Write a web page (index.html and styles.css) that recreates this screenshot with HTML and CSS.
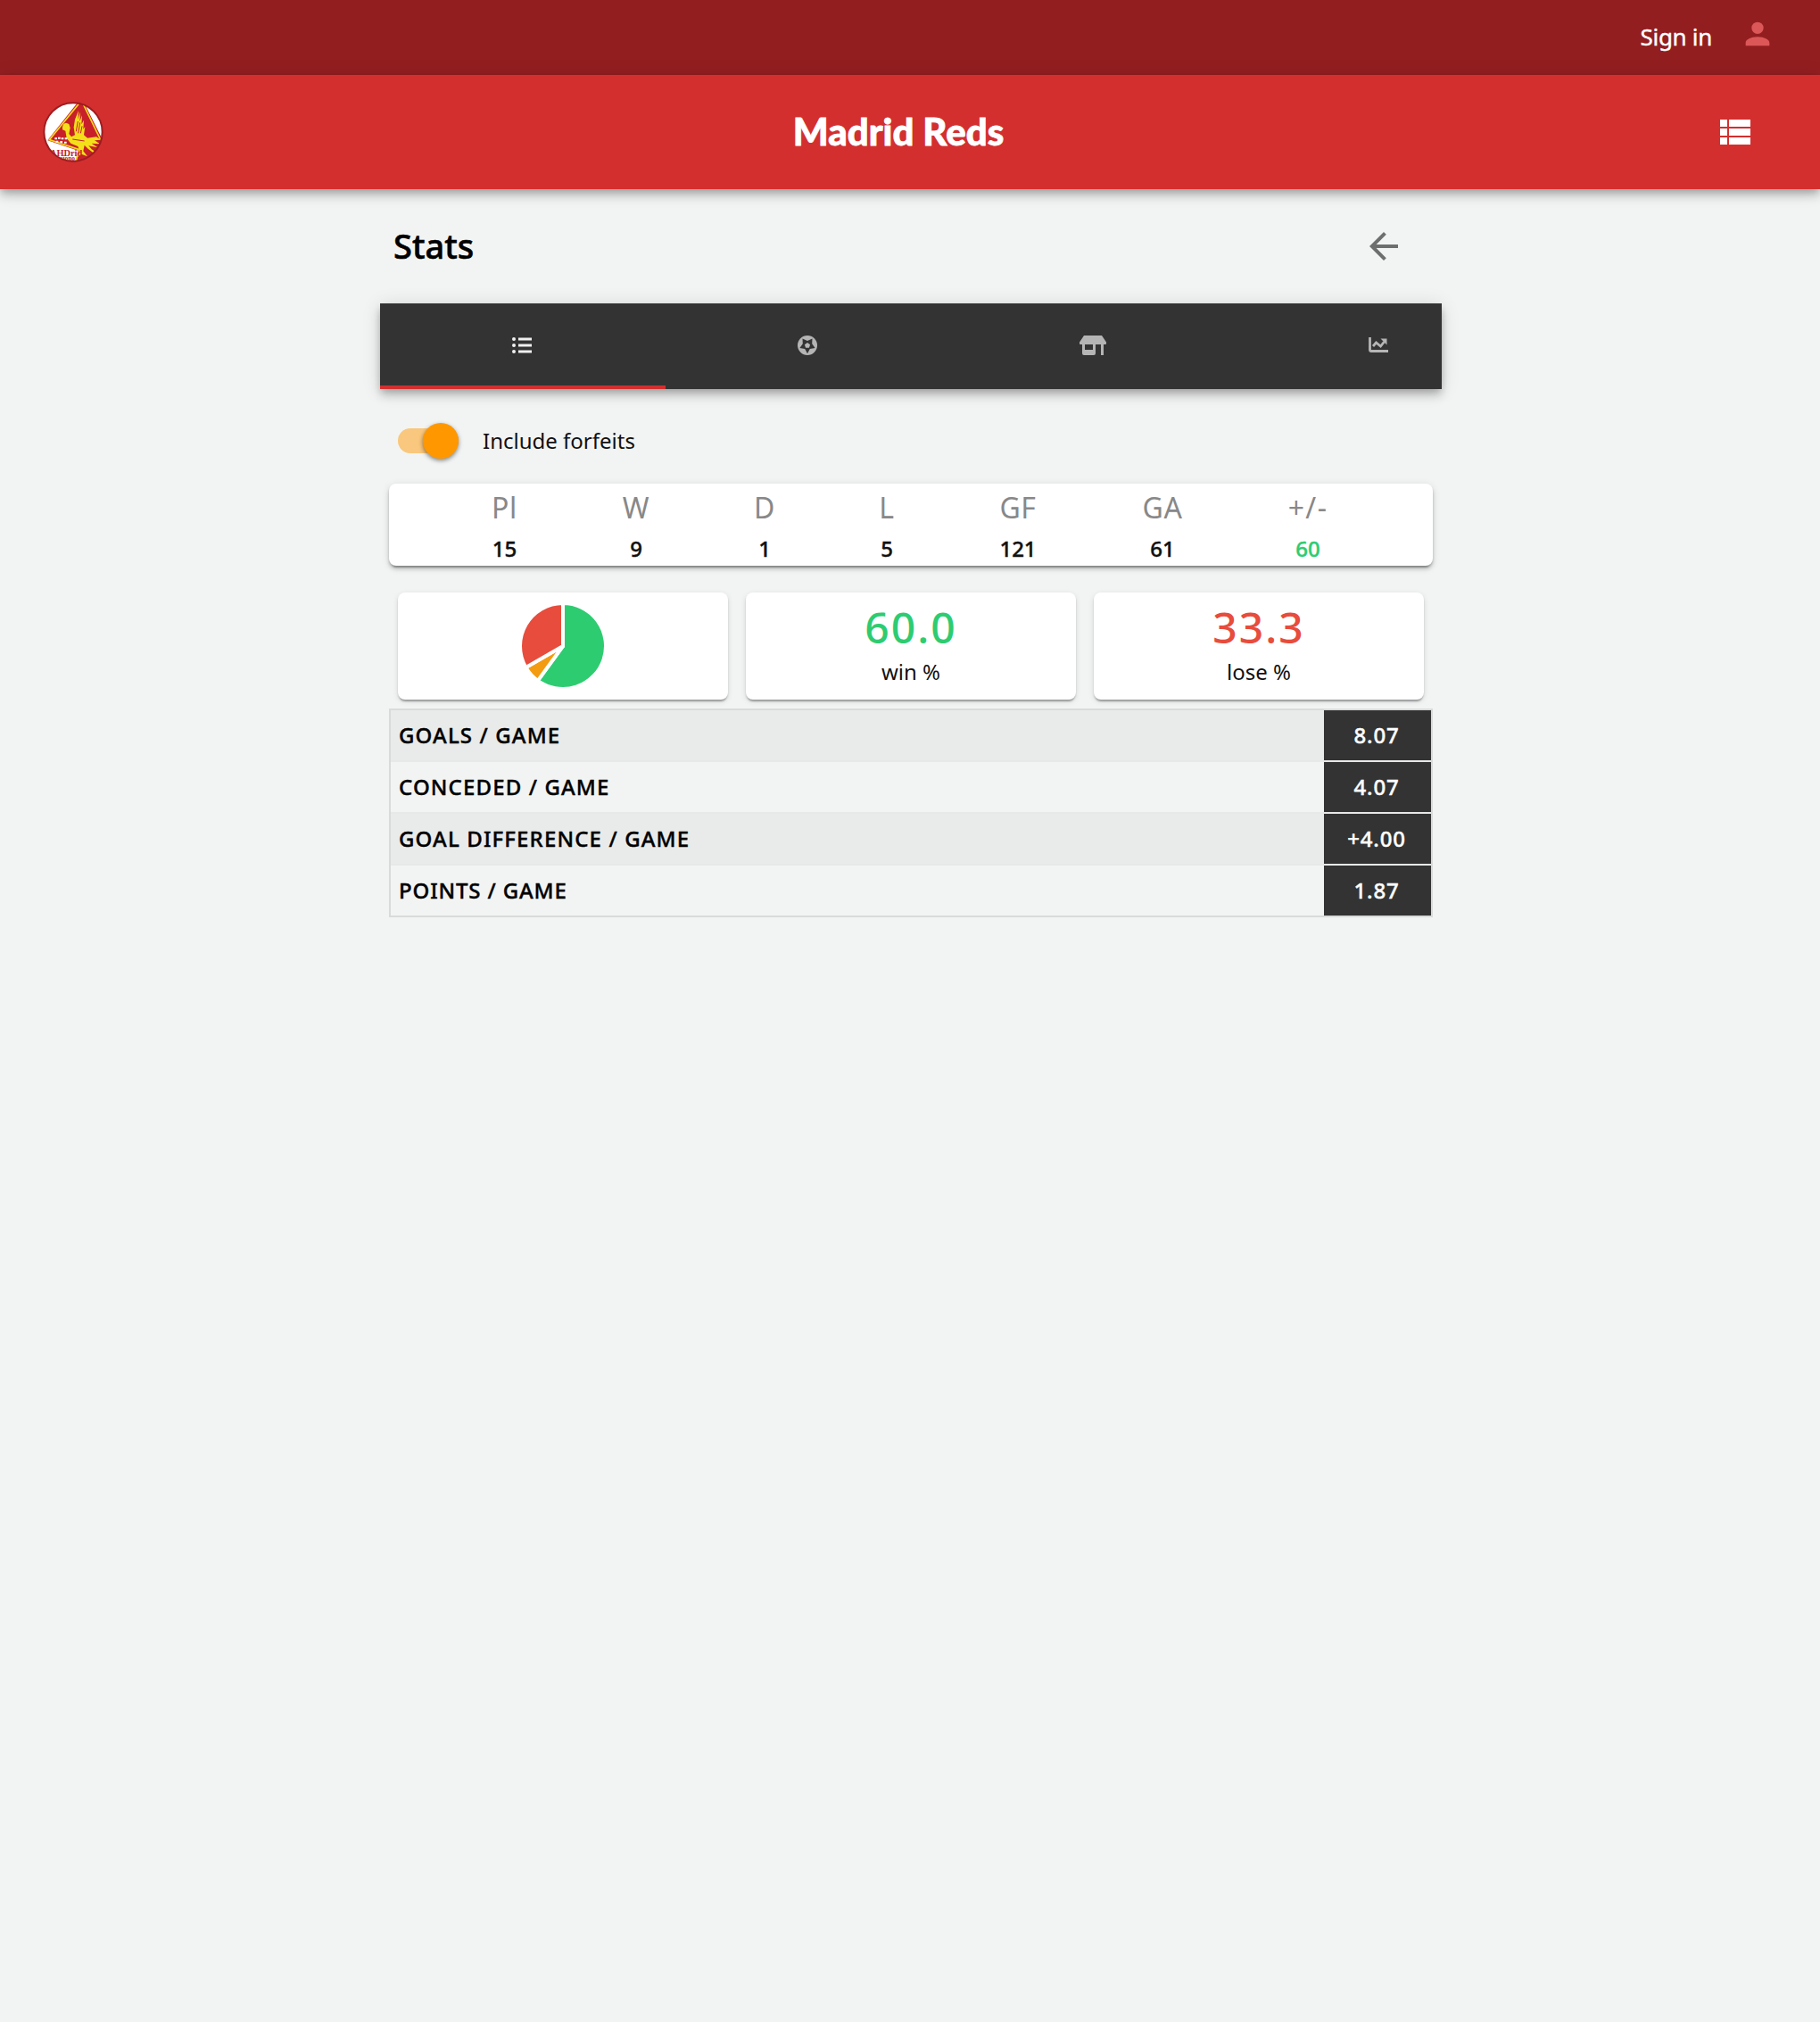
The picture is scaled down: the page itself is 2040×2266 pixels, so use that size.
FILE: index.html
```html
<!DOCTYPE html>
<html lang="en">
<head>
<meta charset="utf-8">
<title>Madrid Reds</title>
<link rel="stylesheet" href="styles.css">
</head>
<body>
<div class="topbar">
  <span class="signin">Sign in</span>
  <svg class="user" viewBox="0 0 24 24"><path d="M12 4a4 4 0 1 1 0 8 4 4 0 0 1 0-8M12 14c4.42 0 8 1.79 8 4v2H4v-2c0-2.21 3.58-4 8-4Z"/></svg>
</div>
<header class="header">
  <svg class="logo" viewBox="0 0 204 204">
    <defs><clipPath id="disc"><circle cx="102" cy="102" r="98"/></clipPath></defs>
    <circle cx="102" cy="102" r="98" fill="#fff"/>
    <g clip-path="url(#disc)">
      <path d="M124 -6 L16 130 L118 164 L110 204 L210 184 L200 126 L134 -6Z" fill="#c8202a"/>
      <path d="M120 8 L22 128 L120 160 L112 200 M134 4 L200 140" fill="none" stroke="#f4d91a" stroke-width="5"/>
      <path d="M66 84 L70 74 78 71 88 75 92 88 88 108 96 118 108 112 104 86 108 60 120 30 118 60 126 34 124 66 132 46 130 76 138 62 136 92 142 84 138 112 150 122 180 118 196 128 174 130 192 142 164 140 184 154 154 148 164 160 182 172 168 170 152 158 140 146 136 166 150 184 130 176 114 188 124 168 118 150 94 140 80 122 76 98 66 94Z" fill="#f4e01a"/>
      <path d="M112 100 L118 66 M119 106 L125 70 M127 106 L132 82 M100 126 L140 132" stroke="#c8202a" stroke-width="3"/>
      <path d="M40 124h8m3-2h8m3 2h8m4 0h8M44 134h8m6 1h8m6 2h8" stroke="#fff" stroke-width="6"/>
      <text class="crest" x="24" y="183">AHDrid</text>
      <text class="crest crest-small" x="58" y="198">ciono</text>
    </g>
    <circle cx="102" cy="102" r="98" fill="none" stroke="#9d1c20" stroke-width="6"/>
  </svg>
  <h1 class="brand">Madrid Reds</h1>
  <svg class="menu" viewBox="0 0 24 24"><path d="M4 5h4v4H4zM9 5h12v4H9zM4 10h4v4H4zM9 10h12v4H9zM4 15h4v4H4zM9 15h12v4H9z"/></svg>
</header>
<main class="page">
  <div class="titlebar">
    <h2>Stats</h2>
    <svg class="back" viewBox="0 0 24 24"><path d="M20 11H7.830l5.590-5.590L12 4l-8 8 8 8 1.410-1.410L7.830 13H20z"/></svg>
  </div>
  <nav class="tabs">
    <div class="tab active"><svg width="22" height="22" viewBox="0 0 22 22"><g fill="currentColor"><circle cx="2" cy="4" r="2"/><circle cx="2" cy="11" r="2"/><circle cx="2" cy="18" r="2"/><path d="M7 2.500h15v3H7zM7 9.500h15v3H7zM7 16.500h15v3H7z"/></g></svg></div>
    <div class="tab"><svg width="22" height="22" viewBox="0 0 22 22"><circle cx="11" cy="11" r="11" fill="currentColor"/><path fill="#333" d="M11 20.200L8.200 15.100 2.400 14 5.800 9.300 5.500 3.500 11 6l5.500-2.500-.3 5.800 3.400 4.700-5.800 1.100z"/><path fill="currentColor" d="M11 8l3.100 2.200-1.200 3.600H9.100l-1.200-3.600z"/></svg></div>
    <div class="tab"><svg width="30" height="22" viewBox="0 0 30 22"><path fill="currentColor" d="M5 0h20l5 7.500V9q0 1-1 1H1Q0 10 0 9V7.500zM3 10h3v6h9v-6h3v10q0 2-2 2H5q-2 0-2-2zM24 10h3v12h-3z"/></svg></div>
    <div class="tab"><svg width="22" height="18" viewBox="0 0 22 18"><path d="M1.500 0v14.500q0 1 1 1H22M5 10l3.500-4 5 4 4-5" fill="none" stroke="currentColor" stroke-width="2.800"/><path d="M13.500 1.500H20.500v7z" fill="currentColor"/></svg></div>
  </nav>
  <div class="toggle-row">
    <span class="switch"><span class="thumb"></span></span>
    <span class="toggle-label">Include forfeits</span>
  </div>
  <section class="card record">
    <div><span class="head">Pl</span><b>15</b></div>
    <div><span class="head">W</span><b>9</b></div>
    <div><span class="head">D</span><b>1</b></div>
    <div><span class="head">L</span><b>5</b></div>
    <div><span class="head">GF</span><b>121</b></div>
    <div><span class="head">GA</span><b>61</b></div>
    <div><span class="head wide">+/-</span><b class="good">60</b></div>
  </section>
  <section class="tiles">
    <div class="card tile pie-tile">
      <svg class="pie" viewBox="-48 -48 96 96"><g stroke="#fff" stroke-width="4"><path fill="#2ecc71" d="M0 0V-48A48 48 0 1 1 -28.210 38.830Z"/><path fill="#f39c12" d="M0 0L-28.210 38.830A48 48 0 0 1 -41.570 24Z"/><path fill="#e74c3c" d="M0 0L-41.570 24A48 48 0 0 1 0 -48Z"/></g></svg>
    </div>
    <div class="card tile"><span class="big good">60.0</span><span class="caption">win %</span></div>
    <div class="card tile"><span class="big bad">33.3</span><span class="caption">lose %</span></div>
  </section>
  <section class="rates">
    <div class="rate"><span class="name">GOALS / GAME</span><span class="value">8.07</span></div>
    <div class="rate"><span class="name">CONCEDED / GAME</span><span class="value">4.07</span></div>
    <div class="rate"><span class="name">GOAL DIFFERENCE / GAME</span><span class="value">+4.00</span></div>
    <div class="rate"><span class="name snug">POINTS / GAME</span><span class="value">1.87</span></div>
  </section>
</main>
</body>
</html>
```
FILE: styles.css
```css
* { box-sizing: border-box; }
body { margin: 0; min-height: 2266px; background: #f2f4f3; color: #000; font-family: "Noto Sans", sans-serif; font-size: 24px; }
svg { display: block; flex: none; }
.topbar { height: 84px; background: #931e20; display: flex; justify-content: flex-end; align-items: center; padding-right: 50px; }
.signin { color: #fff; font-size: 26px; line-height: 36px; letter-spacing: -.3px; margin-right: 31px; padding-bottom: 3px; -webkit-text-stroke: .4px; }
.user { width: 40px; height: 40px; fill: #dc5757; margin-bottom: 8px; }
.header { height: 128px; background: #d32f2f; display: flex; justify-content: space-between; align-items: center; padding: 0 72px 0 48px; box-shadow: 0 4px 8px -2px rgba(0,0,0,.2), 0 8px 10px rgba(0,0,0,.14), 0 2px 20px rgba(0,0,0,.12); }
.logo { width: 68px; height: 68px; }
.crest { font: bold 31px "Liberation Serif", serif; fill: #c8202a; }
.crest-small { font-size: 22px; }
.brand { margin: 0 22px 2px 0; font: 900 42px/60px Lato, sans-serif; color: #fff; -webkit-text-stroke: .8px; }
.menu { width: 48px; height: 48px; fill: #fff; }
.page { width: 1190px; margin: 0 0 0 426px; }
.titlebar { height: 128px; display: flex; align-items: center; justify-content: space-between; padding: 0 41px 0 15px; }
.titlebar h2 { margin: 0; padding-bottom: 3px; font-size: 38px; line-height: 52px; font-weight: 500; -webkit-text-stroke: .6px; }
.back { width: 48px; height: 48px; fill: #6d6f6e; }
.tabs { height: 96px; background: #333; display: flex; overflow: hidden; color: #b5b5b5; box-shadow: 0 4px 8px -2px rgba(0,0,0,.2), 0 8px 10px rgba(0,0,0,.14), 0 2px 20px rgba(0,0,0,.12); }
.tab { flex: 0 0 320px; display: flex; align-items: center; justify-content: center; padding: 0 2px 2px 0; }
.tab.active { color: #f0f0f0; border-bottom: 4px solid #d32f2f; padding: 2px 2px 0 0; }
.toggle-row { height: 106px; padding: 10px 0 0 20px; display: flex; align-items: center; }
.switch { width: 68px; height: 28px; border-radius: 14px; background: #f9c77d; display: flex; align-items: center; justify-content: flex-end; }
.thumb { flex: none; width: 40px; height: 40px; border-radius: 50%; background: #ff9800; box-shadow: 0 2px 4px rgba(0,0,0,.35), 0 2px 6px rgba(0,0,0,.14); }
.toggle-label { margin-left: 27px; padding-bottom: 1px; line-height: 34px; color: #111; }
.card { background: #fff; border-radius: 8px; box-shadow: 0 4px 2px -2px rgba(0,0,0,.2), 0 2px 2px rgba(0,0,0,.14), 0 2px 6px rgba(0,0,0,.12); }
.record { height: 92px; margin: 0 10px; padding: 0 58px 0 55px; display: grid; grid-template-columns: 149px 146px 142px 132px 162px 162px 164px; text-align: center; box-shadow: 0 6px 2px -4px rgba(0,0,0,.2), 0 4px 4px rgba(0,0,0,.14), 0 2px 10px rgba(0,0,0,.12), 0 2px 2px rgba(0,0,0,.14); }
.record div { display: flex; flex-direction: column; }
.record .head { color: #888; font-size: 32px; line-height: 53px; letter-spacing: .6px; }
.record .wide { letter-spacing: 1.4px; }
.record b { font-weight: 500; line-height: 40px; color: #111; -webkit-text-stroke: .4px; }
.tiles { display: grid; grid-template-columns: repeat(3, 370px); gap: 20px; padding: 30px 20px 10px; }
.tile { height: 120px; display: flex; flex-direction: column; align-items: center; }
.pie-tile { justify-content: center; }
.pie { width: 96px; height: 96px; }
.big { font-size: 48px; line-height: 78px; font-weight: 500; letter-spacing: 2px; }
.caption { line-height: 22px; color: #111; }
.card .good { color: #2ecc71; }
.bad { color: #e74c3c; }
.rates { margin: 0 10px; border: 2px solid #d9dbda; }
.rate { height: 58px; display: flex; border-bottom: 2px solid #e7e9e8; }
.rate:nth-child(odd) { background: #e9ebea; }
.rate:last-child { height: 56px; border-bottom: 0; }
.name, .value { line-height: 55px; font-weight: 500; letter-spacing: 1.130px; -webkit-text-stroke: .4px; }
.name { flex: 1; padding-left: 9px; }
.name.snug { letter-spacing: .850px; }
.value { width: 120px; height: 56px; background: #333; color: #fff; text-align: center; letter-spacing: .8px; padding-right: 2px; }
```
